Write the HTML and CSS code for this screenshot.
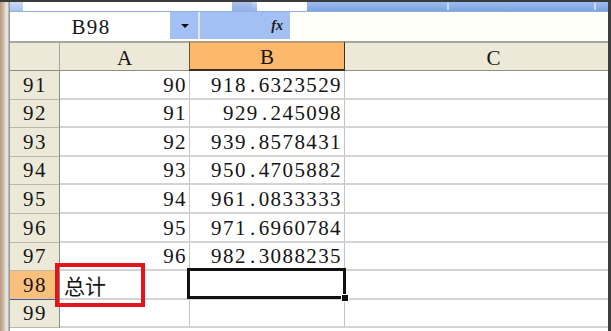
FILE: index.html
```html
<!DOCTYPE html>
<html>
<head>
<meta charset="utf-8">
<link rel="stylesheet" href="styles.css">
</head>
<body>
<div class="top-dark"></div>
<div class="frame">
  <div class="left-edge"></div>
  <div class="main">
    <div class="toolbar">
      <div class="tb-blue-sm"></div>
      <div class="tb-white tb-w1"></div>
      <div class="tb-blue tb-b1"></div>
      <div class="tb-white tb-w2"></div>
      <div class="tb-rest"><span class="tick t1"></span><span class="tick t2"></span></div>
    </div>
    <div class="formula-row">
      <div class="namebox">B98</div>
      <div class="dropdown"><span class="tri"></span></div>
      <div class="sep"></div>
      <div class="fxbox"><span class="fx">fx</span></div>
      <div class="finput"></div>
    </div>
    <div class="sheet">
      <div class="grid">
        <div class="ch corner"></div>
        <div class="ch">A</div>
        <div class="ch ch-sel">B</div>
        <div class="ch ch-last">C</div>

        <div class="rh">91</div><div class="c num">90</div><div class="c num">918<span class="dot">.</span>6323529</div><div class="c last"></div>
        <div class="rh">92</div><div class="c num">91</div><div class="c num">929<span class="dot">.</span>245098</div><div class="c last"></div>
        <div class="rh">93</div><div class="c num">92</div><div class="c num">939<span class="dot">.</span>8578431</div><div class="c last"></div>
        <div class="rh">94</div><div class="c num">93</div><div class="c num">950<span class="dot">.</span>4705882</div><div class="c last"></div>
        <div class="rh">95</div><div class="c num">94</div><div class="c num">961<span class="dot">.</span>0833333</div><div class="c last"></div>
        <div class="rh">96</div><div class="c num">95</div><div class="c num">971<span class="dot">.</span>6960784</div><div class="c last"></div>
        <div class="rh">97</div><div class="c num">96</div><div class="c num">982<span class="dot">.</span>3088235</div><div class="c last"></div>
        <div class="rh rh-sel">98</div><div class="c txt">总计</div><div class="c active"><span class="active-box"><span class="handle"></span></span></div><div class="c last"></div>
        <div class="rh">99</div><div class="c"></div><div class="c"></div><div class="c last"></div>
      </div>
      <div class="redbox"></div>
    </div>
  </div>
  <div class="right-edge"></div>
</div>
</body>
</html>
```

FILE: styles.css
```css
* { box-sizing: border-box; }
html, body { margin: 0; padding: 0; }
body {
  width: 611px;
  height: 331px;
  overflow: hidden;
  background: #ffffff;
  font-family: "Liberation Serif", "Times New Roman", serif;
  color: #151515;
}
.top-dark { height: 2px; background: #3b3b3b; }
.frame { display: flex; height: 329px; }
.left-edge {
  width: 10px;
  background: linear-gradient(to right, #b49a80 0, #cdb59c 3px, #d9cfc4 5px, #f2f2f0 7px, #a5a5a5 9px, #8c8c8c 10px);
}
.right-edge { width: 3px; background: #3e3e3e; }
.main { flex: 1; display: flex; flex-direction: column; min-width: 0; }

.toolbar {
  height: 9px;
  display: flex;
  background: linear-gradient(to bottom, #c7d8f6, #8fb1ea);
}
.tb-blue-sm { width: 13px; background: linear-gradient(to bottom, #c9daf8, #a9c4f2); }
.tb-white { background: #ffffff; }
.tb-w1 { width: 209px; }
.tb-b1 { width: 20px; background: linear-gradient(to bottom, #aac2ec, #94b2e6); }
.tb-w2 { width: 50px; margin-left: 5px; }
.tb-rest { flex: 1; position: relative; background: linear-gradient(to bottom, #9cbcf0, #7ea3e2); }
.tick { position: absolute; top: 1px; width: 2px; height: 7px; background: #c8daf8; }
.t1 { left: 140px; }
.t2 { left: 287px; }

.formula-row {
  height: 30px;
  display: flex;
  border-top: 1px solid #8eaee6;
  border-bottom: 2px solid #ffffff;
  background: #ffffff;
}
.namebox {
  width: 160px;
  display: flex;
  align-items: center;
  justify-content: center;
  font-size: 21px;
  letter-spacing: 1.4px;
  padding-top: 3px;
  padding-left: 2px;
  background: #ffffff;
}
.dropdown {
  width: 28px;
  background: #a2c0f3;
  display: flex;
  align-items: center;
  justify-content: center;
}
.tri {
  width: 0; height: 0;
  border-left: 4px solid transparent;
  border-right: 4px solid transparent;
  border-top: 4px solid #111;
  margin-left: 2px;
}
.sep { width: 2px; background: #dfe9fb; }
.fxbox {
  width: 90px;
  background: #a2c0f3;
  display: flex;
  align-items: center;
  justify-content: flex-end;
  padding-right: 7px;
}
.fx {
  font-family: "Liberation Serif", serif;
  font-style: italic;
  font-weight: bold;
  font-size: 14px;
  color: #1a1a1a;
}
.finput { flex: 1; background: #fffffa; }

.sheet { position: relative; flex: 1; }
.grid {
  display: grid;
  grid-template-columns: 50px 130px 155px 1fr;
  grid-template-rows: 30px repeat(9, 28.6px);
}
.ch {
  background: #ece9d8;
  border-top: 2px solid #a9a89e;
  border-bottom: 1px solid #8f8d80;
  border-right: 1px solid #a6a496;
  display: flex;
  align-items: center;
  justify-content: center;
  font-size: 21px;
  padding-top: 3px;
}
.ch-last { border-right: none; padding-left: 34px; }
.ch-sel {
  background: #fdb86b;
  border-left: 1px solid #6b5434;
  border-right: 1px solid #3a2f22;
  border-bottom: 2px solid #3a2f22;
  border-top: 2px solid #b59a74;
  margin-left: -1px;
}
.rh {
  background: #ece9d8;
  border-right: 1px solid #8f8d80;
  border-bottom: 1px solid #b9b7aa;
  display: flex;
  align-items: flex-end;
  justify-content: center;
  font-size: 21px;
  letter-spacing: 1.4px;
  padding-left: 1px;
  padding-bottom: 1px;
}
.rh-sel {
  background: #f9c07c;
  border-bottom: 1px solid #3d59b5;
}
.c {
  border-right: 1px solid #c4c4c4;
  border-bottom: 2px solid #d4d4d4;
  background: #ffffff;
  display: flex;
  align-items: flex-end;
  font-size: 21px;
  padding-bottom: 0;
}
.c.last { border-right: none; }
.num { justify-content: flex-end; padding-right: 2px; letter-spacing: 1.4px; }
.dot { display: inline-block; width: 11.9px; text-align: center; letter-spacing: 0; }
.txt {
  font-family: "Noto Sans CJK SC", sans-serif;
  font-size: 21px;
  padding-left: 4px;
  padding-bottom: 0;
  line-height: 26px;
}
.active { position: relative; }
.active-box {
  position: absolute;
  left: -3px;
  top: -3px;
  right: -2px;
  bottom: -1px;
  border: 3px solid #111;
}
.handle {
  position: absolute;
  right: -5px;
  bottom: -5px;
  width: 6px;
  height: 6px;
  background: #111;
  outline: 1px solid #ffffff;
}
.redbox {
  position: absolute;
  left: 45px;
  top: 222px;
  width: 90px;
  height: 44px;
  border: 4px solid #e3141c;
}
```
